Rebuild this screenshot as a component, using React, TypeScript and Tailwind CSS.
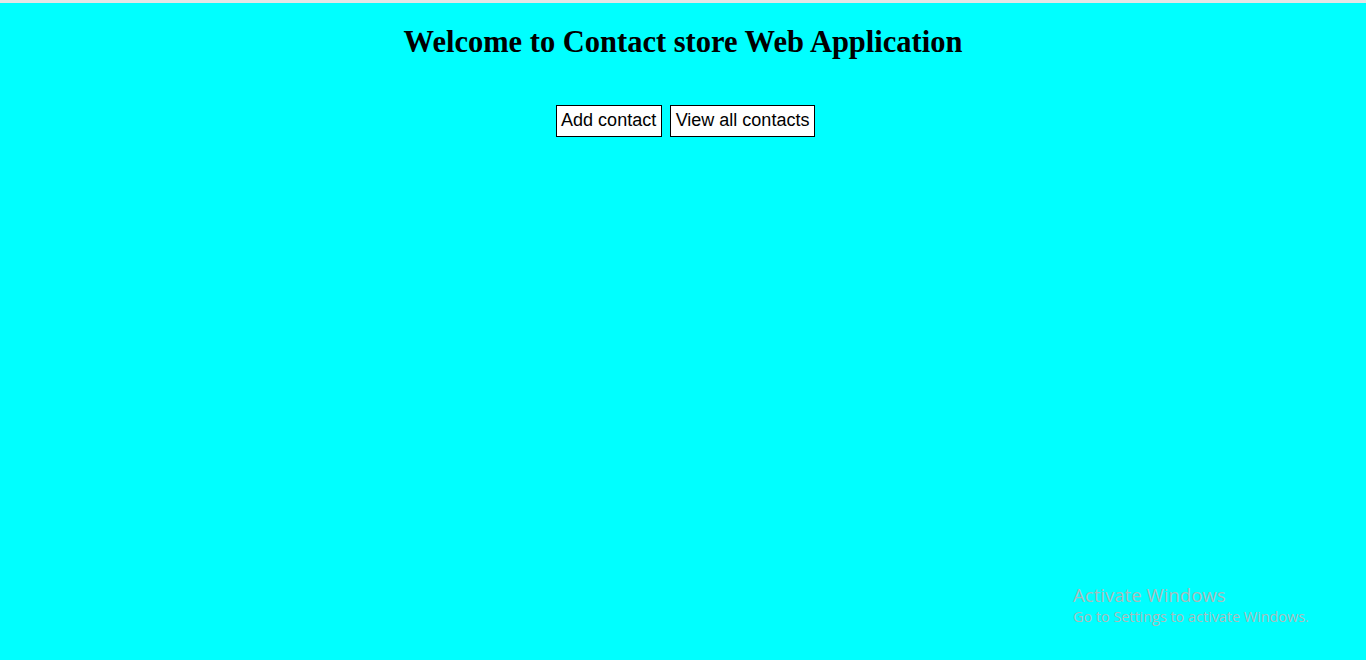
export default function App() {
  return (
    <div className="min-h-[660px] bg-[#00ffff] flex flex-col relative">
      <div className="h-[3px] bg-[#e6e6e6]" />
      <h1 className="mt-[17px] text-center text-[30.5px] font-bold text-black font-['Liberation_Serif',serif]">
        Welcome to Contact store Web Application
      </h1>
      <div className="mt-[39px] ml-[5px] flex justify-center gap-[8px]">
        <button className="h-[32px] px-[4.5px] border border-black bg-white text-[18px] text-black font-['Liberation_Sans',Arial,sans-serif]">
          Add contact
        </button>
        <button className="h-[32px] px-[5px] border border-black bg-white text-[18px] text-black font-['Liberation_Sans',Arial,sans-serif]">
          View all contacts
        </button>
      </div>
      <div className="absolute left-[1073px] top-[583px] text-[#a9bcbc] font-['Open_Sans',sans-serif] leading-tight pointer-events-none">
        <div className="text-[18.6px]">Activate Windows</div>
        <div className="text-[14.4px] mt-[2px]">Go to Settings to activate Windows.</div>
      </div>
    </div>
  );
}
